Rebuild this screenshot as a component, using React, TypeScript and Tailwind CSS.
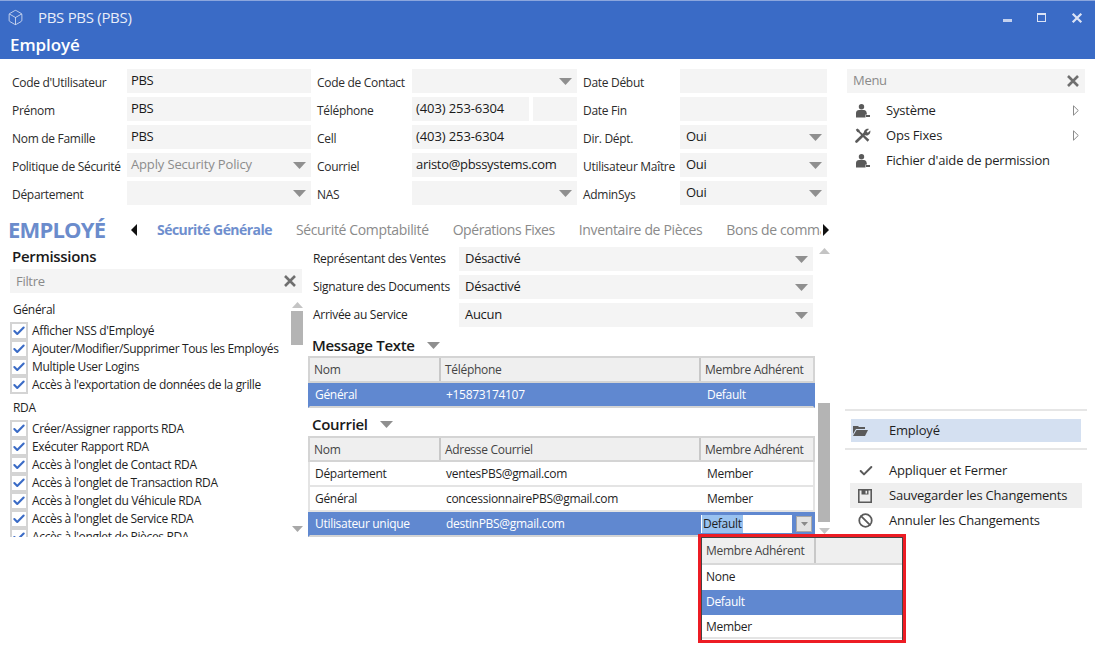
import { Ban, Box, Check } from "lucide-react";

function Caret({ className = "" }: { className?: string }) {
  return (
    <svg width="13" height="7" viewBox="0 0 13 7" className={className}>
      <path d="M0 0h13L6.5 7z" fill="#8f8f8f" />
    </svg>
  );
}

function CloseX({ size = 14, color = "#6f6f6f" }: { size?: number; color?: string }) {
  return (
    <svg width={size} height={size} viewBox="0 0 14 14">
      <path d="M2 2l10 10M12 2L2 12" stroke={color} strokeWidth="2.6" />
    </svg>
  );
}

function PersonIcon() {
  return (
    <svg width="15" height="14" viewBox="0 0 15 14">
      <circle cx="6.500" cy="2.800" r="2.700" fill="#5a5a5a" />
      <path d="M1 13.500V9C1 7 2.500 6 4 6h5c1.500 0 2.200 1 2.500 2.200l.5 2.300H10.500v3z" fill="#5a5a5a" />
      <path d="M11 11h4v2h-4z" fill="#5a5a5a" />
    </svg>
  );
}

function ToolsIcon() {
  return (
    <svg width="16" height="15" viewBox="0 0 16 15">
      <path d="M1.500 13.500L10.500 4.800" stroke="#5a5a5a" strokeWidth="2.600" strokeLinecap="round" />
      <path d="M9 6c-.8-3 1.800-6 5-5L11.500 3.500l1.300 1.300L15.300 2.400c.7 3-2 5.800-5 4.800z" fill="#5a5a5a" />
      <path d="M.8 1.800L2.300.5l2.200 1.600.3 1.200 9.500 8.500-1.700 2-9-9.200-1.300-.5z" fill="#5a5a5a" />
    </svg>
  );
}

function FolderIcon() {
  return (
    <svg width="15" height="11" viewBox="0 0 15 11">
      <path d="M0 2V1h5l1 1h6v2H3L0 9z" fill="#5a5a5a" />
      <path d="M3.500 5H15l-3 6H0z" fill="#5a5a5a" />
    </svg>
  );
}

function SaveIcon() {
  return (
    <svg width="14" height="14" viewBox="0 0 14 14">
      <path d="M.8.800h12.400v12.400H.8z" fill="none" stroke="#5a5a5a" strokeWidth="1.600" />
      <path d="M3.500 1h7v4.500h-7z" fill="#5a5a5a" />
      <path d="M7.500 1.800h1.600v2.800H7.500z" fill="#efefef" />
    </svg>
  );
}

function OutlineArrow() {
  return (
    <svg width="6" height="11" viewBox="0 0 6 11">
      <path d="M.5.800L5.300 5.500.5 10.200z" fill="none" stroke="#8a8a8a" />
    </svg>
  );
}

function Field({ value = "", muted = false, caret = false, pad = "pl-1", className = "", textClass = "" }: {
  value?: string; muted?: boolean; caret?: boolean; pad?: string; className?: string; textClass?: string;
}) {
  return (
    <div className={`h-6 bg-[#f4f4f4] flex items-start justify-between ${pad} ${className}`}>
      <span className={`text-[13px] leading-[22px] whitespace-nowrap ${muted ? "text-[#8c8c8c]" : "text-[#1a1a1a]"} ${textClass}`}>{value}</span>
      {caret && <Caret className="mt-[9px] mr-[5px] shrink-0" />}
    </div>
  );
}

function Label({ children }: { children: string }) {
  return <div className="h-6 text-[12px] leading-[28px] text-[#2c2c2c] whitespace-nowrap">{children}</div>;
}

function PermRow({ text }: { text: string }) {
  return (
    <div className="h-[18px] flex items-center">
      <div className="w-[18px] h-[18px] border-2 border-[#d4d4d4] flex items-center justify-center shrink-0">
        <Check size={14} strokeWidth={3.6} color="#3a6bc6" />
      </div>
      <span className="ml-[4px] text-[12px] tracking-[-0.35px] text-[#1f1f1f] whitespace-nowrap">{text}</span>
    </div>
  );
}

function GridHeader({ cols, widths, height = "h-[25px]" }: { cols: string[]; widths: string[]; height?: string }) {
  return (
    <div className={`flex ${height} bg-[#efefef] border-x-2 border-b-2 border-[#d4d4d4]`}>
      {cols.map((c, i) => (
        <div key={c} className={`${widths[i]} pl-1 text-[12px] leading-[24px] text-[#444] ${i < 2 ? "border-r-2 border-[#c8c8c8]" : ""}`}>{c}</div>
      ))}
    </div>
  );
}

function GridRow({ cells, widths, selected = false }: { cells: string[]; widths: string[]; selected?: boolean }) {
  return (
    <div className={`flex h-[25px] border-x-2 border-b-2 ${selected ? "bg-[#6088d0] text-white border-x-[#6088d0] border-b-[#d4d4d4]" : "text-[#1f1f1f] border-x-[#e4e4e4] border-b-[#e4e4e4]"}`}>
      {cells.map((c, i) => (
        <div key={c} className={`${widths[i]} ${i < 2 ? "pl-[5px]" : "pl-[6px]"} text-[12px] leading-[24px] whitespace-nowrap`}>{c}</div>
      ))}
    </div>
  );
}

function MenuItem({ icon, text, arrow = false, className = "" }: { icon: React.ReactNode; text: string; arrow?: boolean; className?: string }) {
  return (
    <div className={`h-[25px] flex items-center ${className}`}>
      <div className="w-[39px] pl-[8px] flex items-center shrink-0">{icon}</div>
      <span className="text-[13px] tracking-[-0.2px] text-[#1f1f1f] whitespace-nowrap">{text}</span>
      {arrow && <div className="ml-auto mr-[8px] flex"><OutlineArrow /></div>}
    </div>
  );
}

const tableWidths = ["w-[131px]", "w-[260px]", "flex-1"];

export default function App() {
  return (
    <div className="relative w-[1095px] h-[653px] overflow-hidden bg-white font-['Open_Sans',sans-serif] tracking-[-0.3px]">
      <header className="h-[59px] bg-[#3a6bc6] border-t border-[#8ba6dd] text-white">
        <div className="h-[33px] flex items-center pl-[7px]">
          <Box size={17} strokeWidth={1.2} color="#d5def2" />
          <span className="ml-[14px] text-[15px] text-[#e8edf8]">PBS PBS (PBS)</span>
          <div className="ml-auto flex items-center gap-[25px] pr-[12px]">
            <div className="w-[9px] h-[3px] bg-[#c4d1ee] mt-[6px]" />
            <div className="w-[9px] h-[9px] border border-t-2 border-[#dbe3f5]" />
            <CloseX size={12} color="#dbe3f5" />
          </div>
        </div>
        <div className="pl-[10px] text-[17px] tracking-[-0.1px] leading-[22px] font-semibold">Employé</div>
      </header>

      <div className="flex">
        <main className="w-[835px] shrink-0">
          <section className="pt-[10px] pl-[12px] flex">
            <div className="w-[115px] flex flex-col gap-1">
              <Label>Code d'Utilisateur</Label>
              <Label>Prénom</Label>
              <Label>Nom de Famille</Label>
              <Label>Politique de Sécurité</Label>
              <Label>Département</Label>
            </div>
            <div className="w-[184px] flex flex-col gap-1">
              <Field value="PBS" />
              <Field value="PBS" />
              <Field value="PBS" />
              <Field value="Apply Security Policy" muted caret textClass="tracking-[-0.15px]" />
              <Field caret />
            </div>
            <div className="w-[95px] ml-[6px] flex flex-col gap-1">
              <Label>Code de Contact</Label>
              <Label>Téléphone</Label>
              <Label>Cell</Label>
              <Label>Courriel</Label>
              <Label>NAS</Label>
            </div>
            <div className="w-[165px] flex flex-col gap-1">
              <Field caret />
              <div className="flex gap-1">
                <Field value="(403) 253-6304" className="w-[117px]" textClass="tracking-[-0.1px]" />
                <Field className="flex-1" />
              </div>
              <Field value="(403) 253-6304" textClass="tracking-[-0.1px]" />
              <Field value="aristo@pbssystems.com" />
              <Field caret />
            </div>
            <div className="w-[97px] ml-[6px] flex flex-col gap-1">
              <Label>Date Début</Label>
              <Label>Date Fin</Label>
              <Label>Dir. Dépt.</Label>
              <Label>Utilisateur Maître</Label>
              <Label>AdminSys</Label>
            </div>
            <div className="w-[147px] flex flex-col gap-1">
              <Field />
              <Field />
              <Field value="Oui" caret pad="pl-[6px]" />
              <Field value="Oui" caret pad="pl-[6px]" />
              <Field value="Oui" caret pad="pl-[6px]" />
            </div>
          </section>

          <section className="mt-[8px] h-[33px] flex items-center pl-[8px]">
            <div className="w-[123px] text-[22px] font-bold text-[#6b8ccc] tracking-[-0.8px] leading-[33px]">EMPLOYÉ</div>
            <div className="w-[26px] flex"><svg width="6" height="12" viewBox="0 0 6 12"><path d="M6 0v12L0 6z" fill="#111" /></svg></div>
            <div className="w-[664px] flex items-center overflow-hidden text-[14px] tracking-[-0.35px] text-[#8a8a8a] whitespace-nowrap gap-[24px]">
              <span className="font-bold tracking-[-0.55px] text-[#6f8fce]">Sécurité Générale</span>
              <span>Sécurité Comptabilité</span>
              <span className="tracking-[-0.45px]">Opérations Fixes</span>
              <span>Inventaire de Pièces</span>
              <span>Bons de commande</span>
            </div>
            <svg width="6" height="12" viewBox="0 0 6 12" className="ml-[2px] shrink-0"><path d="M0 0v12l6-6z" fill="#111" /></svg>
          </section>

          <section className="flex">
            <aside className="w-[308px] shrink-0 pl-[10px]">
              <h2 className="pl-[2px] text-[15px] leading-[20px] font-semibold text-[#1a1a1a]">Permissions</h2>
              <div className="mt-[3px] w-[292px] h-6 bg-[#f4f4f4] flex items-center justify-between pl-[6px] pr-[5px]">
                <span className="pt-[2px] text-[13px] text-[#8a8a8a]">Filtre</span>
                <CloseX />
              </div>
              <div className="mt-[7px] w-[293px] h-[237px] flex">
                <div className="w-[279px] h-full overflow-hidden">
                  <div className="pl-[3px] h-[20px] text-[12px] leading-[20px] text-[#1f1f1f]">Général</div>
                  <div className="pt-[2px]">
                    <PermRow text="Afficher NSS d'Employé" />
                    <PermRow text="Ajouter/Modifier/Supprimer Tous les Employés" />
                    <PermRow text="Multiple User Logins" />
                    <PermRow text="Accès à l'exportation de données de la grille" />
                  </div>
                  <div className="mt-[2px] pl-[3px] h-[23px] text-[12px] leading-[24px] text-[#1f1f1f]">RDA</div>
                  <div className="pt-[1px]">
                    <PermRow text="Créer/Assigner rapports RDA" />
                    <PermRow text="Exécuter Rapport RDA" />
                    <PermRow text="Accès à l'onglet de Contact RDA" />
                    <PermRow text="Accès à l'onglet de Transaction RDA" />
                    <PermRow text="Accès à l'onglet du Véhicule RDA" />
                    <PermRow text="Accès à l'onglet de Service RDA" />
                    <PermRow text="Accès à l'onglet de Pièces RDA" />
                  </div>
                </div>
                <div className="w-[12px] ml-[2px] h-full flex flex-col items-center">
                  <svg width="11" height="6" viewBox="0 0 11 6" className="mt-[2px]"><path d="M0 6h11L5.500 0z" fill="#c4c4c4" /></svg>
                  <div className="mt-[3px] w-[12px] h-[34px] bg-[#b4b4b4]" />
                  <svg width="11" height="6" viewBox="0 0 11 6" className="mt-auto mb-[5px]"><path d="M0 0h11L5.500 6z" fill="#a8a8a8" /></svg>
                </div>
              </div>
            </aside>

            <div className="w-[507px] shrink-0 pt-[1px]">
              <div className="flex flex-col gap-1">
                {[["Représentant des Ventes", "Désactivé"], ["Signature des Documents", "Désactivé"], ["Arrivée au Service", "Aucun"]].map(([l, v]) => (
                  <div key={l} className="flex pl-[5px]">
                    <div className="w-[146px] h-6 text-[12px] leading-[24px] text-[#1f1f1f] whitespace-nowrap">{l}</div>
                    <Field value={v} caret pad="pl-[6px]" className="w-[354px]" />
                  </div>
                ))}
              </div>
              <div className="mt-[7px] pl-[4px] h-[22px] flex items-center">
                <h2 className="text-[15px] font-semibold text-[#1a1a1a]">Message Texte</h2>
                <Caret className="ml-[12px]" />
              </div>
              <div className="border-t-2 border-[#d4d4d4]">
                <GridHeader cols={["Nom", "Téléphone", "Membre Adhérent"]} widths={tableWidths} />
                <GridRow cells={["Général", "+15873174107", "Default"]} widths={tableWidths} selected />
              </div>
              <div className="mt-[5px] pl-[4px] h-[22px] flex items-center">
                <h2 className="text-[15px] font-semibold text-[#1a1a1a]">Courriel</h2>
                <Caret className="ml-[12px]" />
              </div>
              <div className="mt-[1px] border-t-2 border-[#d4d4d4]">
                <GridHeader cols={["Nom", "Adresse Courriel", "Membre Adhérent"]} widths={tableWidths} height="h-[24px]" />
                <GridRow cells={["Département", "ventesPBS@gmail.com", "Member"]} widths={tableWidths} />
                <GridRow cells={["Général", "concessionnairePBS@gmail.com", "Member"]} widths={tableWidths} />
                <div className="flex h-[25px] border-x-2 border-b-2 bg-[#6088d0] text-white border-x-[#6088d0] border-b-[#d4d4d4]">
                  <div className="w-[131px] pl-[5px] text-[12px] leading-[24px]">Utilisateur unique</div>
                  <div className="w-[260px] pl-[5px] text-[12px] leading-[24px]">destinPBS@gmail.com</div>
                  <div className="flex-1 flex pt-[3px]">
                    <div className="w-[91px] h-[18px] bg-white pl-[1px] flex items-start">
                      <span className="bg-[#99c2f0] text-[#1f1f1f] text-[12px] leading-[18px] block px-[1px]">Default</span>
                    </div>
                    <div className="ml-[4px] mt-[1px] w-[16px] h-[16px] bg-[#e2e2e2] border border-[#a8a8a8] flex items-center justify-center">
                      <svg width="7" height="4" viewBox="0 0 7 4"><path d="M0 0h7L3.500 4z" fill="#8a8a8a" /></svg>
                    </div>
                  </div>
                </div>
              </div>
            </div>

            <div className="w-[12px] ml-[3px] shrink-0 flex flex-col items-center pt-[2px] h-[288px]">
              <svg width="11" height="6" viewBox="0 0 11 6"><path d="M0 6h11L5.500 0z" fill="#c4c4c4" /></svg>
              <div className="mt-auto w-[12px] h-[119px] bg-[#b4b4b4]" />
              <svg width="11" height="6" viewBox="0 0 11 6" className="mt-[6px]"><path d="M0 0h11L5.500 6z" fill="#c4c4c4" /></svg>
            </div>
          </section>
        </main>

        <nav className="w-[260px] pl-[10px] pt-[10px] pr-[8px] flex flex-col">
          <div className="mx-[2px] w-[238px] h-6 bg-[#f4f4f4] flex items-center justify-between pl-[6px] pr-[5px]">
            <span className="text-[13px] text-[#8a8a8a]">Menu</span>
            <CloseX />
          </div>
          <div className="mt-[5px] ml-[2px]">
            <MenuItem icon={<PersonIcon />} text="Système" arrow />
            <MenuItem icon={<ToolsIcon />} text="Ops Fixes" arrow />
            <MenuItem icon={<PersonIcon />} text="Fichier d'aide de permission" />
          </div>
          <div className="mt-[236px] h-[2px] w-[242px] bg-[#e6e6e6]" />
          <div className="mt-[8px] ml-[6px] w-[230px] h-[23px] bg-[#d4e0f1] flex items-center">
            <div className="w-[38px] pl-[2px] flex shrink-0"><FolderIcon /></div>
            <span className="text-[13px] tracking-[-0.2px] text-[#1f1f1f]">Employé</span>
          </div>
          <div className="mt-[6px] h-[2px] w-[242px] bg-[#e6e6e6]" />
          <div className="mt-[8px] ml-[5px] w-[232px]">
            <MenuItem icon={<Check size={16} strokeWidth={3} color="#5a5a5a" />} text="Appliquer et Fermer" />
            <MenuItem icon={<SaveIcon />} text="Sauvegarder les Changements" className="bg-[#efefef]" />
            <MenuItem icon={<Ban size={15} strokeWidth={2.8} color="#5a5a5a" />} text="Annuler les Changements" />
          </div>
        </nav>
      </div>

      <div className="absolute left-[698px] top-[534px] w-[208px] h-[109px] border-[3px] border-[#ed1c24] bg-white">
        <div className="h-full border-x border-t border-[#444]">
          <div className="h-[27px] border-b-2 border-[#d8d8d8] bg-[#efefef] flex">
            <div className="w-[114px] pl-[4px] border-r-2 border-[#c8c8c8] text-[12px] leading-[25px] text-[#444]">Membre Adhérent</div>
          </div>
          <div className="text-[12px]">
            <div className="h-[25px] pl-[4px] leading-[24px] text-[#1f1f1f]">None</div>
            <div className="h-[25px] pl-[4px] leading-[24px] bg-[#6088d0] text-white">Default</div>
            <div className="h-[24px] pl-[4px] leading-[24px] text-[#1f1f1f] border-b-2 border-[#e4e4e4]">Member</div>
          </div>
        </div>
      </div>
    </div>
  );
}
